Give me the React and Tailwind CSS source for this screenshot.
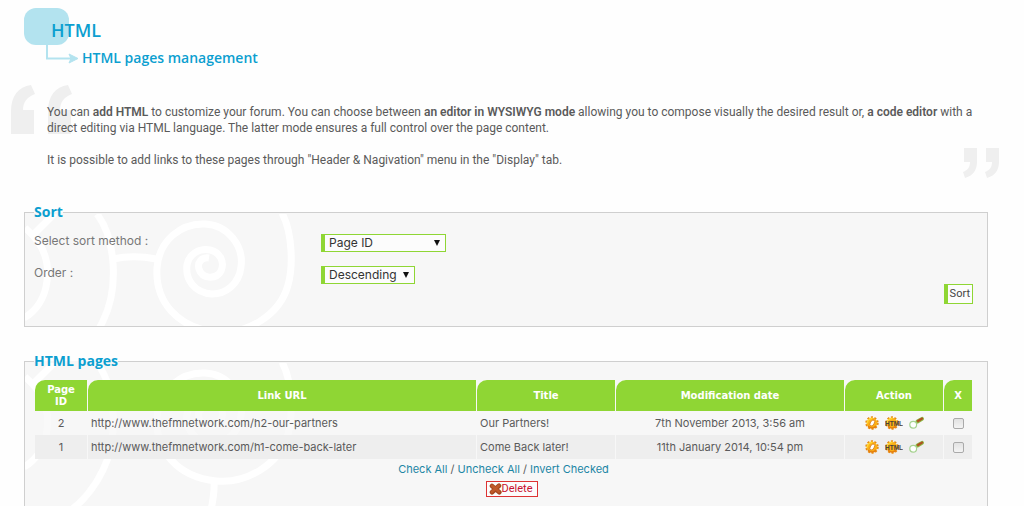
import React from "react";

const pages = [
  { id: 2, url: "http://www.thefmnetwork.com/h2-our-partners", title: "Our Partners!", date: "7th November 2013, 3:56 am" },
  { id: 1, url: "http://www.thefmnetwork.com/h1-come-back-later", title: "Come Back later!", date: "11th January 2014, 10:54 pm" },
];

const heading = "font-['Open_Sans','Noto_Sans',sans-serif] text-[#0c9fd0]";
const linkStyle = "text-[#1d86a5] hover:underline";
const headCell = "h-[31px] rounded-tl-[10px] bg-[#8fd634] px-2 font-['DejaVu_Sans',Verdana,sans-serif] text-[10px] font-bold leading-3 text-white";

function Swirls() {
  return (
    <svg
      aria-hidden="true"
      width="300"
      height="160"
      viewBox="0 0 300 160"
      fill="none"
      stroke="#fff"
      strokeWidth="7"
    >
      <path d="M257 -1C268 20 268 54 263 71C255 101 222 121 191 118C152 114 130 87 132 54C134 27 155 9 180 10C203 11 219 32 216 53C214 70 201 80 187 80C170 79 160 66 162 51C164 40 174 34 185 36C195 38 200 48 196 57C191 66 177 65 174 55C172 48 177 43 184 44" />
      <path d="M131 45C116 42 102 42 88 45" />
      <path d="M72 0C91 25 94 75 78 107C67 130 50 147 30 158" />
      <path d="M0 14C17 28 25 45 22 67C20 84 11 97 -1 104" />
      <path d="M30 -1L10 19" />
      <path d="M189 119C190 132 186 148 183 160" />
    </svg>
  );
}

function Panel({ title, className, children }) {
  return (
    <fieldset className={`relative min-w-0 border border-[#cfcfcf] bg-[#f7f7f7] pl-[9px] pr-3.5 ${className}`}>
      <legend className={`${heading} relative z-10 text-[14px] font-bold leading-5`}>{title}</legend>
      <div aria-hidden="true" className="pointer-events-none absolute inset-x-0 -top-2 bottom-0 overflow-hidden">
        <Swirls />
      </div>
      <div className="relative">{children}</div>
    </fieldset>
  );
}

function SortSelect({ id, label, options, className }) {
  return (
    <>
      <label htmlFor={id} className="text-xs leading-3.5 text-[#777]">{label}</label>
      <div>
        <span className="relative inline-block align-top">
          <select
            id={id}
            className={`block h-[18px] appearance-none border border-l-4 border-[#8fd634] bg-[#fcfcfc] pl-1 text-xs leading-4 text-[#333] ${className}`}
          >
            {options.map((o) => <option key={o}>{o}</option>)}
          </select>
          <svg aria-hidden="true" className="pointer-events-none absolute right-1.5 top-1.5" width="6" height="6" viewBox="0 0 6 6">
            <path d="M0 0H6L3 6Z" fill="#111" />
          </svg>
        </span>
      </div>
    </>
  );
}

function Gear({ hole = true }) {
  return (
    <g>
      <circle cx="7" cy="7" r="5.7" fill="none" stroke="#e58a14" strokeWidth="2" strokeDasharray="2 1.58" />
      <circle cx="7" cy="7" r="5.3" fill="#fbb016" />
      <path d="M2.2 7.5A4.8 4.8 0 0 1 7.5 2.4" fill="none" stroke="#ffd633" strokeWidth="1.6" />
      <path d="M3 10A5 5 0 0 0 11 10" fill="none" stroke="#e57f0e" strokeWidth="1.4" />
      {hole && <ellipse cx="7.3" cy="7" rx="1.9" ry="3.3" transform="rotate(30 7.3 7)" fill="#fff" stroke="#d4720c" strokeWidth=".7" />}
    </g>
  );
}

function GearIcon() {
  return <svg width="14" height="14" viewBox="0 0 14 14"><Gear /></svg>;
}

function HtmlIcon() {
  return (
    <svg width="18" height="14" viewBox="0 0 18 14">
      <Gear hole={false} />
      <text x="0" y="9.5" fontSize="6.5" fontWeight="bold" fontFamily="Liberation Sans, sans-serif" fill="#4a4038">HTML</text>
    </svg>
  );
}

function MagnifierIcon() {
  return (
    <svg width="15" height="14" viewBox="0 0 15 14">
      <path d="M6.5 7L9 5" stroke="#a2cf52" strokeWidth="2.4" />
      <path d="M8.5 5.5L13 2.8" stroke="#8fb545" strokeWidth="3.8" strokeLinecap="round" />
      <path d="M9 5L13 2.6" stroke="#b04f20" strokeWidth="2.2" strokeLinecap="round" />
      <circle cx="4.2" cy="8.7" r="3.4" fill="#fff" stroke="#a7d391" strokeWidth="1.2" />
    </svg>
  );
}

function CrossIcon() {
  return (
    <svg width="13" height="12" viewBox="0 0 13 12">
      <path d="M3 3L10.3 9.3M10 2.8L3 9.3" stroke="#a5481f" strokeWidth="4.6" strokeLinecap="round" />
      <path d="M3 2.8L9.8 8.6M9.8 2.6L3 8.8" stroke="#c05a2a" strokeWidth="2.6" strokeLinecap="round" />
    </svg>
  );
}

function IconLink({ label, children }) {
  return <a href="#" aria-label={label} className="block">{children}</a>;
}

export default function App() {
  return (
    <main className="min-h-screen bg-[#fefefe] pb-6 pl-6 pr-9 pt-2 font-['Inter','DejaVu_Sans',sans-serif] text-[11px] text-[#5a5a5a]">
      <header className="relative">
        <svg aria-hidden="true" className="absolute left-0 top-0" width="56" height="58" viewBox="0 0 56 58">
          <rect x="0" y="0" width="45" height="37" rx="12" fill="#b3e3ef" />
          <path d="M23 37V50.5H48" fill="none" stroke="#b3e3ef" strokeWidth="2" />
          <path d="M45 46L54 50.5L45 55L47 50.5Z" fill="#b3e3ef" stroke="#b3e3ef" />
        </svg>
        <h1 className={`${heading} relative pl-[27px] pt-2 text-[18px] font-semibold leading-7`}>HTML</h1>
        <h2 className={`${heading} relative pl-[58px] pt-1 text-[14px] font-semibold leading-5`}>HTML pages management</h2>
      </header>

      <section className="relative mt-9 pl-[23px] font-['Roboto','Noto_Sans',sans-serif] text-xs leading-4">
        <svg aria-hidden="true" className="absolute -left-[13px] -top-5" width="61" height="50" viewBox="0 0 61 50" fill="#efefef">
          <path d="M0 50V28C0 12 7 3 20 1L24 10C16 13 12 18 12 26H23V50Z" />
          <path d="M37 50V28C37 12 44 3 57 1L61 10C53 13 49 18 49 26H60V50Z" />
        </svg>
        <svg aria-hidden="true" className="absolute -right-3 top-11" width="37" height="30" viewBox="0 0 37 30" fill="#efefef">
          <path d="M1 0H14V14C14 23 9 28 2 30L0 24C5 22 7 19 7 14H1Z" />
          <path d="M23 0H36V14C36 23 31 28 24 30L22 24C27 22 29 19 29 14H23Z" />
        </svg>
        <p className="relative">
          You can <b className="font-semibold">add HTML</b> to customize your forum. You can choose between{" "}
          <b className="font-semibold">an editor in WYSIWYG mode</b> allowing you to compose visually the desired result or,{" "}
          <b className="font-semibold">a code editor</b> with a direct editing via HTML language. The latter mode ensures a full control over the page content.
        </p>
        <p className="relative mt-4">It is possible to add links to these pages through "Header &amp; Nagivation" menu in the "Display" tab.</p>
      </section>

      <form onSubmit={(e) => e.preventDefault()} className="mt-[34px]">
        <Panel title="Sort" className="pb-[22px]">
          <div className="grid grid-cols-[287px_1fr] gap-y-3.5 pt-3">
            <SortSelect id="method" label="Select sort method :" options={["Page ID", "Title", "Modification date"]} className="w-[125px]" />
            <SortSelect id="order" label="Order :" options={["Descending", "Ascending"]} className="w-[94px]" />
          </div>
          <div className="flex justify-end">
            <button type="submit" className="h-5 border border-l-4 border-[#8fd634] bg-[#fcfcfc] px-0.5 font-['Roboto',sans-serif] text-[11px] leading-4 text-[#444]">Sort</button>
          </div>
        </Panel>
      </form>

      <form onSubmit={(e) => e.preventDefault()} className="mt-6">
        <Panel title="HTML pages" className="pb-8">
          <table className="mt-[9px] w-full table-fixed border-separate border-spacing-x-px border-spacing-y-0">
            <colgroup>
              <col className="w-[52px]" />
              <col />
              <col className="w-[138px]" />
              <col className="w-[228px]" />
              <col className="w-[98px]" />
              <col className="w-7" />
            </colgroup>
            <thead>
              <tr className="bg-white">
                {["Page ID", "Link URL", "Title", "Modification date", "Action", "X"].map((h) => (
                  <th key={h} scope="col" className={headCell}>{h}</th>
                ))}
              </tr>
            </thead>
            <tbody>
              {pages.map((p, i) => (
                <tr key={p.id} className={`h-6 ${i % 2 ? "bg-[#eee]" : "bg-[#f7f7f7]/70"}`}>
                  <td className="text-center">{p.id}</td>
                  <td className="px-[3px]">{p.url}</td>
                  <td className="px-[3px]">{p.title}</td>
                  <td className="text-center">{p.date}</td>
                  <td className="p-0">
                    <div className="flex items-center justify-center gap-1.5">
                      <IconLink label="Edit"><GearIcon /></IconLink>
                      <IconLink label="Edit HTML"><HtmlIcon /></IconLink>
                      <IconLink label="Preview"><MagnifierIcon /></IconLink>
                    </div>
                  </td>
                  <td className="p-0">
                    <input
                      type="checkbox"
                      aria-label={`Select page ${p.id}`}
                      className="mx-auto block size-[11px] appearance-none rounded-xs border border-[#aaa] bg-linear-to-b from-[#e2e2e2] to-[#f4f4f4] checked:bg-[#8fd634]"
                    />
                  </td>
                </tr>
              ))}
            </tbody>
          </table>
          <div className="pt-0.5 text-center leading-4">
            <a href="#" className={linkStyle}>Check All</a> / <a href="#" className={linkStyle}>Uncheck All</a> / <a href="#" className={linkStyle}>Invert Checked</a>
          </div>
          <div className="flex justify-center pl-4 pt-1">
            <button type="button" className="flex h-4 items-center border border-[#d33] bg-[#fcfcfc] pl-0.5 pr-1 font-['Roboto',sans-serif] text-[11px] leading-3 text-[#c8102e]">
              <CrossIcon />Delete
            </button>
          </div>
        </Panel>
      </form>
    </main>
  );
}
